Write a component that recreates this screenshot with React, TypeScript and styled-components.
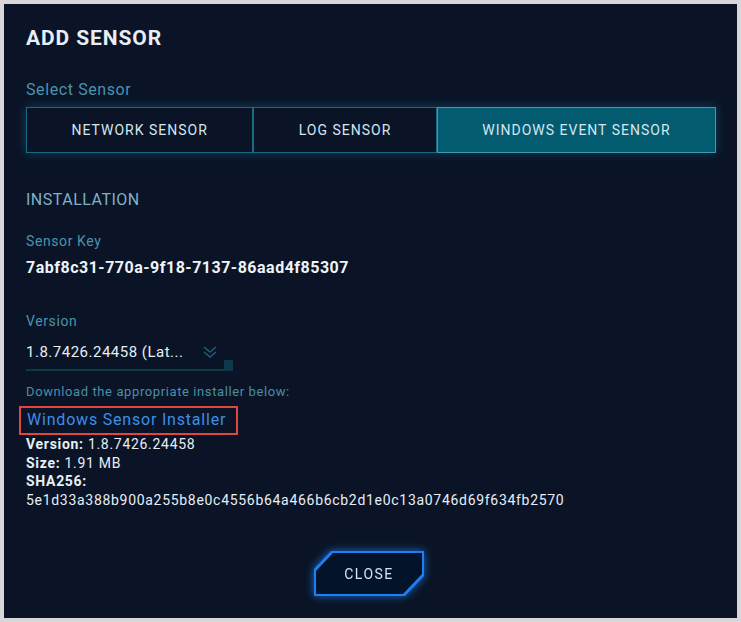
import styled, { createGlobalStyle } from "styled-components";
import { useState } from "react";

const GlobalStyle = createGlobalStyle`
  html, body {
    margin: 0;
    padding: 0;
    background: #d8d8d8;
  }
  body {
    font-family: Roboto, "Liberation Sans", sans-serif;
  }
`;

const tabs = ["NETWORK SENSOR", "LOG SENSOR", "WINDOWS EVENT SENSOR"];

const App = () => {
  const [active, setActive] = useState(2);

  return (
    <>
      <GlobalStyle />
      <Page>
        <Modal>
          <Title>ADD SENSOR</Title>

          <FieldLabel>Select Sensor</FieldLabel>
          <TabRow>
            {tabs.map((tab, i) => (
              <Tab key={tab} $active={i === active} onClick={() => setActive(i)}>
                {tab}
              </Tab>
            ))}
          </TabRow>

          <SectionTitle>INSTALLATION</SectionTitle>

          <SmallLabel>Sensor Key</SmallLabel>
          <KeyValue>7abf8c31-770a-9f18-7137-86aad4f85307</KeyValue>

          <SmallLabel $top={34}>Version</SmallLabel>
          <Select>
            <SelectText>1.8.7426.24458 (Lat...</SelectText>
            <Chevron width="14" height="14" viewBox="0 0 14 14">
              <path d="M1 2 L7 7 L13 2" fill="none" stroke="#1e5f78" strokeWidth="1.5" />
              <path d="M1 7 L7 12 L13 7" fill="none" stroke="#1e5f78" strokeWidth="1.5" />
            </Chevron>
            <SelectHandle />
          </Select>

          <Hint>Download the appropriate installer below:</Hint>
          <InstallerLink href="#">Windows Sensor Installer</InstallerLink>
          <Meta>
            <b>Version:</b> 1.8.7426.24458
          </Meta>
          <Meta>
            <b>Size:</b> 1.91 MB
          </Meta>
          <Meta>
            <b>SHA256:</b>
          </Meta>
          <Meta>5e1d33a388b900a255b8e0c4556b64a466b6cb2d1e0c13a0746d69f634fb2570</Meta>

          <Footer>
            <CloseGlow>
              <CloseEdge>
                <CloseButton>CLOSE</CloseButton>
              </CloseEdge>
            </CloseGlow>
          </Footer>
        </Modal>
      </Page>
    </>
  );
};

const Page = styled.div`
  padding: 4px;
  width: 741px;
  height: 622px;
  box-sizing: border-box;
`;

const Modal = styled.div`
  width: 733px;
  height: 614px;
  box-sizing: border-box;
  background: #0a1426;
  padding: 21px 21px 0 22px;
  display: flex;
  flex-direction: column;
`;

const Title = styled.div`
  font-size: 21px;
  font-weight: 700;
  letter-spacing: 0.9px;
  color: #e6eef6;
  line-height: 26px;
`;

const FieldLabel = styled.div`
  margin-top: 29px;
  font-size: 16px;
  line-height: 20px;
  letter-spacing: 0.6px;
  color: #4b93ad;
`;

const TabRow = styled.div`
  margin-top: 7px;
  display: flex;
  box-shadow: 0 0 10px rgba(32, 130, 170, 0.4);
`;

const Tab = styled.button<{ $active: boolean }>`
  flex: 1 1 auto;
  height: 46px;
  padding: 0;
  border: 1px solid ${(p) => (p.$active ? "#3f98b2" : "#1a6a84")};
  background: ${(p) => (p.$active ? "#035b70" : "#0a1426")};
  color: #d4e6f0;
  font-family: Roboto, "Liberation Sans", sans-serif;
  font-size: 14px;
  letter-spacing: 1px;
  cursor: pointer;
`;

const SectionTitle = styled.div`
  margin-top: 37px;
  font-size: 16px;
  line-height: 20px;
  letter-spacing: 0.5px;
  color: #7fb1c6;
`;

const SmallLabel = styled.div<{ $top?: number }>`
  margin-top: ${(p) => p.$top ?? 22}px;
  font-size: 14px;
  line-height: 18px;
  letter-spacing: 0.6px;
  color: #4b93ad;
`;

const KeyValue = styled.div`
  margin-top: 8px;
  font-size: 16px;
  font-weight: 700;
  line-height: 20px;
  letter-spacing: 0.5px;
  color: #eef4f8;
`;

const Select = styled.div`
  margin-top: 9px;
  width: 207px;
  height: 32px;
  padding-bottom: 5px;
  box-sizing: border-box;
  border-bottom: 2px solid #0d3a4b;
  display: flex;
  align-items: center;
  position: relative;
`;

const SelectText = styled.span`
  flex: 1;
  font-size: 15px;
  letter-spacing: 0.5px;
  color: #e6eef6;
`;

const Chevron = styled.svg`
  margin-right: 16px;
`;

const SelectHandle = styled.div`
  position: absolute;
  right: 0;
  bottom: -2px;
  width: 9px;
  height: 11px;
  background: #0d3a4b;
`;

const Hint = styled.div`
  margin-top: 12px;
  font-size: 13px;
  line-height: 18px;
  letter-spacing: 0.6px;
  color: #4b8ea6;
`;

const InstallerLink = styled.a`
  margin-top: 5px;
  margin-left: -7px;
  align-self: flex-start;
  padding: 2px 10px 3px 6px;
  border: 2px solid #e0473e;
  font-size: 16px;
  line-height: 20px;
  letter-spacing: 0.8px;
  color: #3d8fe8;
  text-decoration: none;
`;

const Meta = styled.div`
  font-size: 14px;
  line-height: 18.5px;
  letter-spacing: 0.7px;
  color: #e6eef6;

  b {
    font-weight: 700;
  }
`;

const Footer = styled.div`
  margin-top: 42px;
  display: flex;
  justify-content: center;
  padding-right: 4px;
`;

const cut = "polygon(17px 0, 100% 0, 100% calc(100% - 20px), calc(100% - 19px) 100%, 0 100%, 0 18px)";

const CloseGlow = styled.div`
  filter: drop-shadow(0 0 4px rgba(30, 130, 255, 0.8));
`;

const CloseEdge = styled.div`
  padding: 2px;
  background: #1d80f2;
  clip-path: ${cut};
`;

const CloseButton = styled.button`
  display: block;
  width: 106px;
  height: 41px;
  border: none;
  background: #03132a;
  clip-path: ${cut};
  color: #d6e4ee;
  font-family: Roboto, "Liberation Sans", sans-serif;
  font-size: 14px;
  letter-spacing: 1.5px;
  cursor: pointer;
`;

export default App;
